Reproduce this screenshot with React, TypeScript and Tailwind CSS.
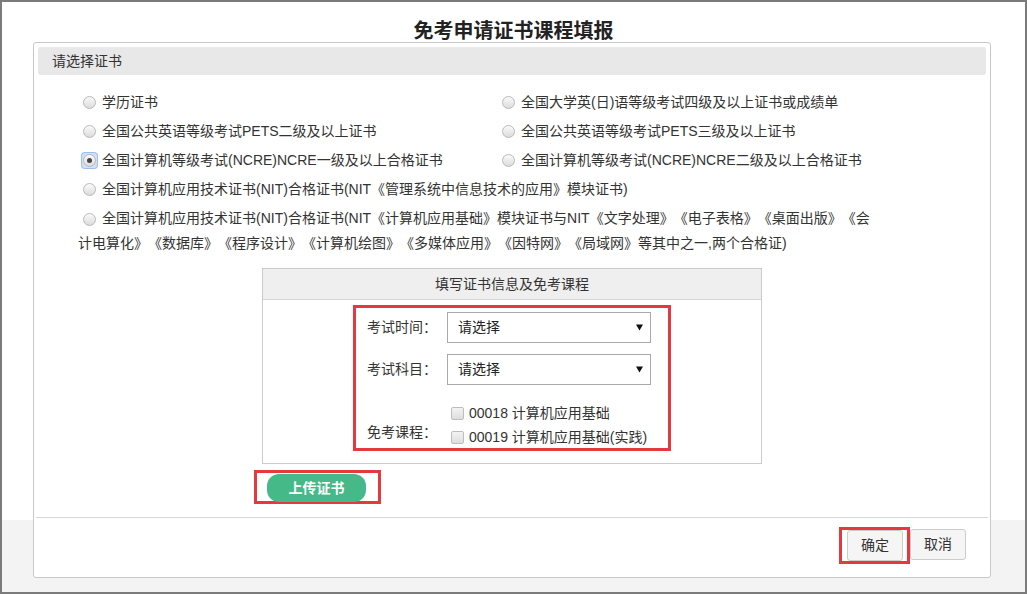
const font = { fontFamily: '"Liberation Sans", "Noto Sans CJK SC", sans-serif' };

function Radio({ checked = false }: { checked?: boolean }) {
  return (
    <span
      className={
        "ml-[4px] mr-[5px] inline-flex h-[15px] w-[15px] shrink-0 items-center justify-center rounded-[3px] align-middle " +
        (checked ? "bg-[#cfe0f7] shadow-[0_0_0_1px_#9cc0ec]" : "")
      }
    >
      <span className="flex h-[13px] w-[13px] items-center justify-center rounded-full border border-[#b9b9b9] bg-gradient-to-b from-[#fafafa] to-[#dcdcdc]">
        {checked && <span className="h-[5px] w-[5px] rounded-full bg-[#444]" />}
      </span>
    </span>
  );
}

function Checkbox() {
  return <span className="mr-[5px] inline-block h-[13px] w-[13px] shrink-0 rounded-[2px] border border-[#bdbdbd] bg-gradient-to-b from-[#f3f3f3] to-[#dedede]" />;
}

function Select() {
  return (
    <div className="flex h-[31px] w-[204px] shrink-0 items-center justify-between border border-[#a9a9a9] bg-white pl-[10px] pr-[7px] text-[14px] text-[#222]">
      <span>请选择</span>
      <svg width="7" height="7" viewBox="0 0 7 7">
        <path d="M0 0.5h7L3.5 6.5z" fill="#111" />
      </svg>
    </div>
  );
}

function Option({ label, checked = false }: { label: string; checked?: boolean }) {
  return (
    <div className="flex items-center py-[2px] leading-[25px]">
      <Radio checked={checked} />
      <span>{label}</span>
    </div>
  );
}

export default function App() {
  return (
    <div
      style={font}
      className="h-[594px] w-[1027px] border-2 border-[#7b7b7b] bg-[linear-gradient(to_bottom,#ffffff_518px,#f3f3f3_518px)] text-[14px] text-[#333] [text-spacing-trim:space-all]"
    >
      <h1 className="pt-[18px] text-center text-[20px] font-bold leading-[22px] text-[#222]">免考申请证书课程填报</h1>

      <div className="ml-[31px] flex h-[536px] w-[958px] flex-col rounded-[3px] border border-[#c8c8c8] bg-white p-[4px]">
        <div className="h-[28px] rounded-[3px] bg-[#e8e8e8] pl-[14px] leading-[28px]">请选择证书</div>

        <div className="mt-[13px] grid grid-cols-[419px_1fr] pl-[40px]">
          <Option label="学历证书" />
          <Option label="全国大学英(日)语等级考试四级及以上证书或成绩单" />
          <Option label="全国公共英语等级考试PETS二级及以上证书" />
          <Option label="全国公共英语等级考试PETS三级及以上证书" />
          <Option label="全国计算机等级考试(NCRE)NCRE一级及以上合格证书" checked />
          <Option label="全国计算机等级考试(NCRE)NCRE二级及以上合格证书" />
          <div className="col-span-2">
            <Option label="全国计算机应用技术证书(NIT)合格证书(NIT《管理系统中信息技术的应用》模块证书)" />
          </div>
          <div className="col-span-2 w-[800px] py-[2px] leading-[25px]">
            <Radio />
            全国计算机应用技术证书(NIT)合格证书(NIT《计算机应用基础》模块证书与NIT《文字处理》《电子表格》《桌面出版》《会计电算化》《数据库》《程序设计》《计算机绘图》《多媒体应用》《因特网》《局域网》等其中之一,两个合格证)
          </div>
        </div>

        <div className="mx-auto mt-[10px] h-[196px] w-[500px] border border-[#cccccc]">
          <div className="h-[31px] border-b border-[#d6d6d6] bg-[#efefef] text-center leading-[31px]">填写证书信息及免考课程</div>
          <div className="mx-auto mt-[5px] flex h-[146px] w-[318px] flex-col border-[3px] border-[#e53a3d] pl-[11px] pt-[4px]">
            <div className="flex items-center">
              <span className="w-[80px] shrink-0">考试时间：</span>
              <Select />
            </div>
            <div className="mt-[11px] flex items-center">
              <span className="w-[80px] shrink-0">考试科目：</span>
              <Select />
            </div>
            <div className="mt-[16px] flex">
              <span className="w-[84px] shrink-0 self-end pb-[5px] leading-[24px]">免考课程：</span>
              <div className="flex flex-col text-[#333]">
                <label className="flex items-center leading-[24px]">
                  <Checkbox />
                  00018 计算机应用基础
                </label>
                <label className="flex items-center leading-[24px]">
                  <Checkbox />
                  00019 计算机应用基础(实践)
                </label>
              </div>
            </div>
          </div>
        </div>

        <div className="ml-[216px] mt-[6px] h-[34px] w-[127px] border-[3px] border-[#e53a3d] pl-[10px] pt-[1px]">
          <button className="h-[28px] w-[99px] rounded-[12px] bg-[#45b988] text-[14px] font-bold text-white">上传证书</button>
        </div>

        <div className="-mx-[2px] mt-[13px] border-t border-[#d8d8d8]" />

        <div className="mt-[9px] flex justify-end pr-[20px]">
          <div className="border-[3px] border-[#e53a3d] pl-[5px] pr-[4px]">
            <button className="h-[31px] w-[56px] rounded-[3px] border border-[#cccccc] bg-[#f5f5f5] text-[14px] text-[#333]">确定</button>
          </div>
          <button className="mt-[2px] h-[31px] w-[56px] rounded-[3px] border border-[#cccccc] bg-[#f5f5f5] text-[14px] text-[#333]">取消</button>
        </div>
      </div>
    </div>
  );
}
